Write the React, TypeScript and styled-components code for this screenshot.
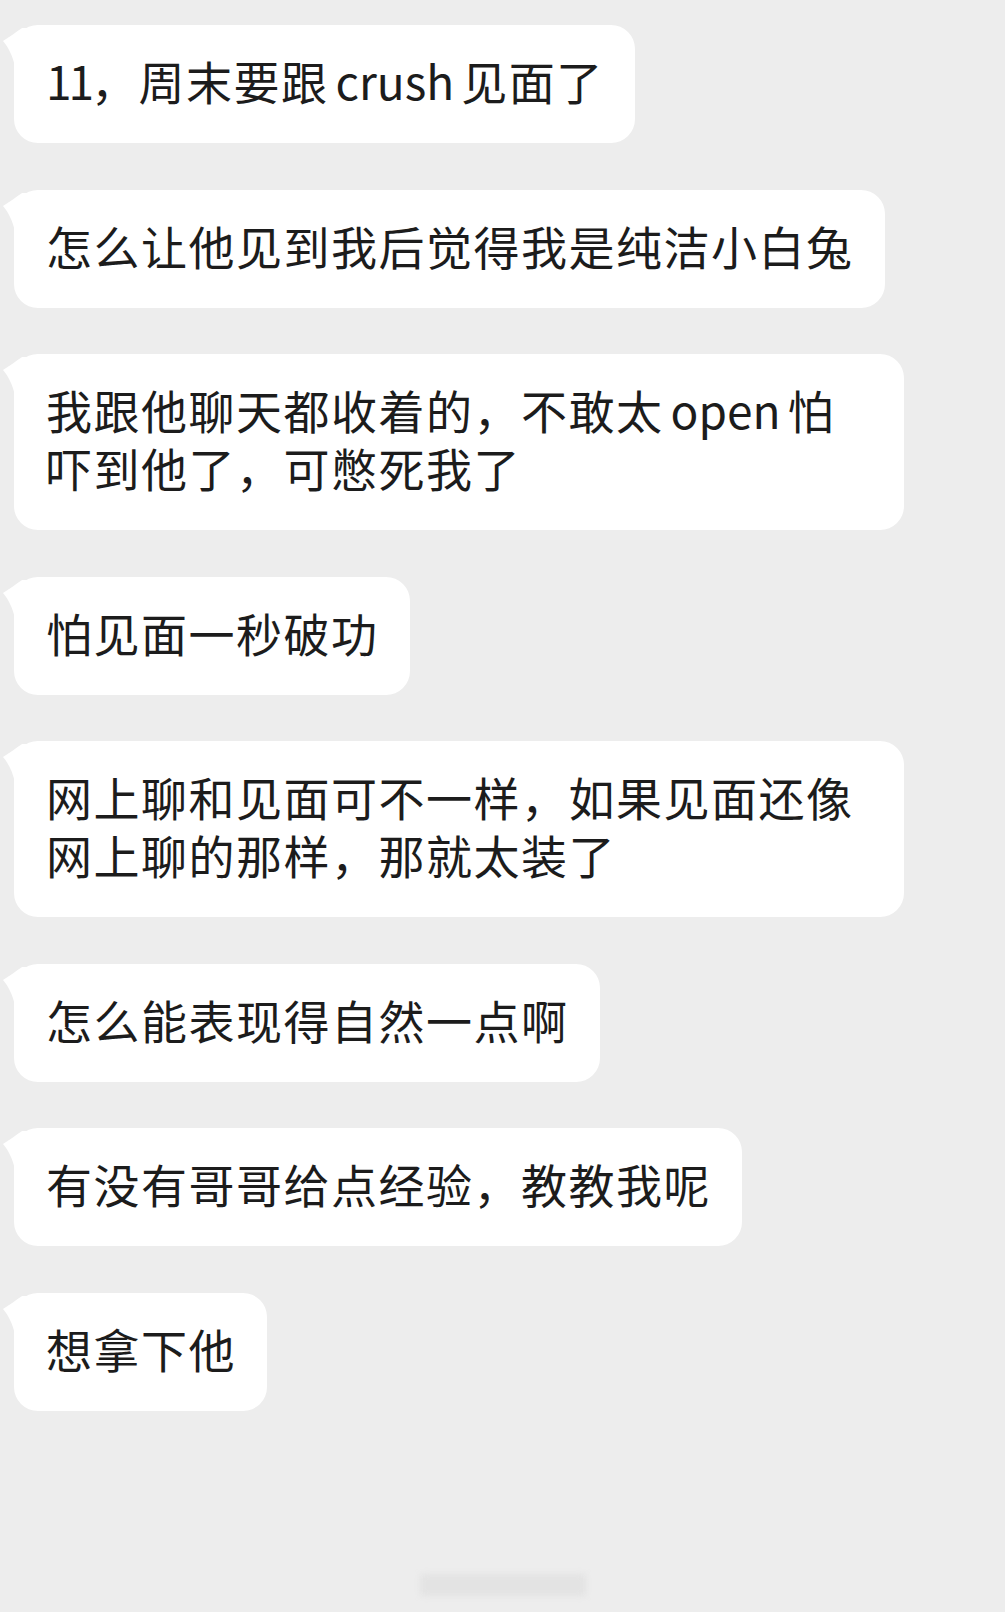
import { FC, ReactNode } from "react";
import styled, { createGlobalStyle } from "styled-components";

const GlobalStyle = createGlobalStyle`
	html, body {
		margin: 0;
		padding: 0;
		background-color: #ededed;
	}
	body {
		font-family: "Noto Sans CJK SC", "Noto Sans", sans-serif;
	}
`;

const Page = styled.div`
	min-height: 1612px;
	box-sizing: border-box;
	padding: 25px 0 0 14px;
	display: flex;
	flex-direction: column;
	align-items: flex-start;
	gap: 46.5px;
	background-color: #ededed;
`;

const Bubble = styled.div`
	position: relative;
	box-sizing: border-box;
	max-width: 890px;
	padding: 26px 31px 34px 32px;
	background-color: #ffffff;
	border-radius: 24px;
	color: #1c1c1c;
	font-size: 46px;
	letter-spacing: 1.5px;
	line-height: 58px;
	font-weight: 400;
`;

const Latin = styled.span<{ $tight?: boolean }>`
	margin: 0 ${props => (props.$tight ? "0" : "7px")};
	letter-spacing: ${props => (props.$tight ? "-3px" : "0")};
`;

const TailSvg = styled.svg`
	position: absolute;
	left: -11px;
	top: 0;
	width: 26px;
	height: 42px;
`;

const Watermark = styled.div`
	align-self: center;
	margin-top: auto;
	margin-bottom: 16px;
	margin-left: -14px;
	width: 166px;
	height: 22px;
	border-radius: 4px;
	background-color: #e3e3e3;
	filter: blur(3px);
`;

const Tail: FC = () => (
	<TailSvg viewBox="0 0 26 42">
		<path
			d="M0 16 C 6 12, 12 8, 19 3 L 26 3 L 26 42 L 12 42 C 10 32, 6 23, 0 16 Z"
			fill="#ffffff"
		/>
	</TailSvg>
);

const messages: ReactNode[] = [
	<>
		<Latin $tight>11</Latin>，周末要跟<Latin>crush</Latin>见面了
	</>,
	"怎么让他见到我后觉得我是纯洁小白兔",
	<>
		我跟他聊天都收着的，不敢太<Latin>open</Latin>怕吓到他了，可憋死我了
	</>,
	"怕见面一秒破功",
	"网上聊和见面可不一样，如果见面还像网上聊的那样，那就太装了",
	"怎么能表现得自然一点啊",
	"有没有哥哥给点经验，教教我呢",
	"想拿下他",
];

const App: FC = () => {
	return (
		<>
			<GlobalStyle />
			<Page>
				{messages.map((text, index) => (
					<Bubble key={String(index)}>
						<Tail />
						{text}
					</Bubble>
				))}
				<Watermark />
			</Page>
		</>
	);
};

export default App;
